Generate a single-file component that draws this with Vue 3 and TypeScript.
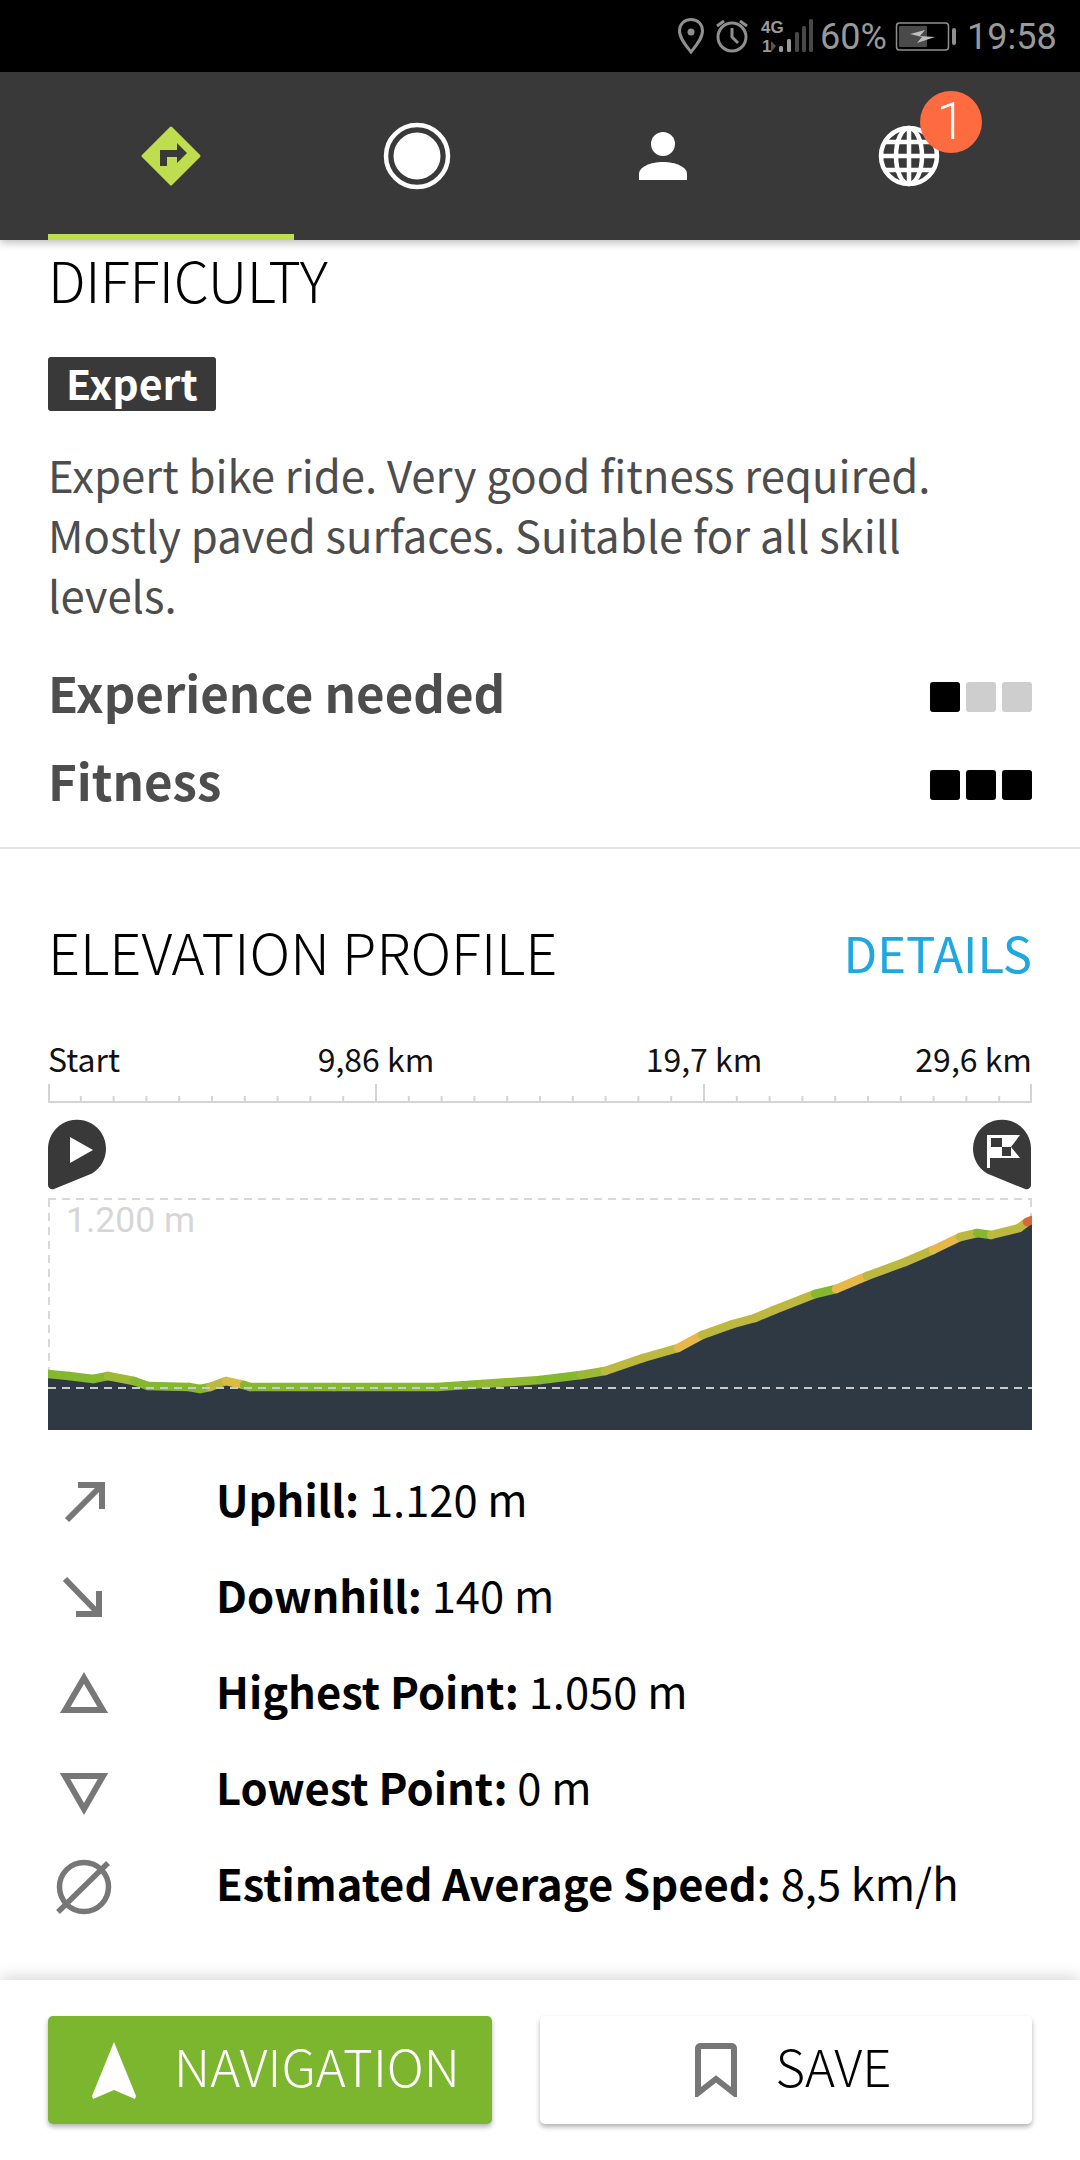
<script setup lang="ts">
type Seg = { x1: number; y1: number; x2: number; y2: number; color: string };

const GREEN = '#85b82e';
const OLIVE = '#bdb83f';
const ORANGE = '#e6b84a';
const RED = '#d9663c';

// x, y, colour of the segment that ends at this point
const profile: [number, number, string][] = [
  [48, 1374, GREEN], [69, 1376, GREEN], [93, 1379, GREEN], [108, 1376, GREEN], [134, 1381, '#a0b838'],
  [148, 1386, GREEN], [189, 1387, GREEN], [200, 1389, GREEN], [210, 1387, GREEN], [226, 1381, OLIVE],
  [244, 1385, '#d8bc44'], [250, 1387, GREEN], [334, 1387, GREEN], [437, 1387, GREEN], [482, 1384, GREEN],
  [540, 1380, '#92b832'], [581, 1375, GREEN], [605, 1371, '#9cb836'], [643, 1358, OLIVE], [678, 1348, OLIVE],
  [702, 1335, ORANGE], [733, 1324, OLIVE], [755, 1318, OLIVE], [774, 1310, OLIVE], [815, 1294, OLIVE], [836, 1289, GREEN],
  [867, 1276, ORANGE], [905, 1262, OLIVE], [933, 1250, OLIVE], [960, 1237, ORANGE], [977, 1233, OLIVE],
  [991, 1235, GREEN], [1019, 1228, OLIVE], [1027, 1222, OLIVE], [1032, 1220, RED],
];

const segments: Seg[] = profile.slice(1).map((p, i) => ({
  x1: profile[i][0],
  y1: profile[i][1],
  x2: p[0],
  y2: p[1],
  color: p[2],
}));

const areaPoints = [
  '48,1430',
  ...profile.map((p) => `${p[0]},${p[1] + 2}`),
  '1032,1430',
].join(' ');

const minorTicks: number[] = [];
for (let i = 0; i <= 30; i++) minorTicks.push(48 + (984 / 30) * i);

const axisLabels = [
  { text: '9,86 km', x: 328 },
  { text: '19,7 km', x: 656 },
];

const stats = [
  { icon: 'up', label: 'Uphill:', value: '1.120 m' },
  { icon: 'down', label: 'Downhill:', value: '140 m' },
  { icon: 'high', label: 'Highest Point:', value: '1.050 m' },
  { icon: 'low', label: 'Lowest Point:', value: '0 m' },
  { icon: 'avg', label: 'Estimated Average Speed:', value: '8,5 km/h' },
];
</script>

<template>
  <div class="screen">
    <div class="status-bar">
      <svg class="status-icons" width="282" height="72" viewBox="678 0 282 72">
        <path d="M691 19.500c-7 0-11.500 5-11.500 11.500 0 7 6 14 11.500 21 5.500-7 11.500-14 11.500-21 0-6.500-4.500-11.500-11.500-11.500z" fill="none" stroke="#8f8f8f" stroke-width="3" />
        <circle cx="691" cy="32" r="3.500" fill="#8f8f8f" />
        <circle cx="732" cy="37" r="14" fill="none" stroke="#8f8f8f" stroke-width="3" />
        <path d="M732 28v9l6 6M717 26l7-5M747 26l-7-5" fill="none" stroke="#8f8f8f" stroke-width="3" />
        <text x="761" y="33" class="net-text">4G</text>
        <text x="762" y="52" class="net-text">1</text>
        <path d="M771 41l5 5-5 6z" fill="#555" />
        <g fill="#9a9a9a">
          <rect x="779" y="46" width="4" height="6" rx="1.500" />
          <rect x="787" y="39" width="4" height="13" rx="1.500" />
        </g>
        <g fill="#484848">
          <rect x="795" y="32" width="4" height="20" rx="1.500" />
          <rect x="802" y="26" width="4" height="26" rx="1.500" />
          <rect x="809" y="19" width="4" height="33" rx="1.500" />
        </g>
        <rect x="896.500" y="23" width="52" height="27" rx="3" fill="none" stroke="#8f8f8f" stroke-width="1.500" />
        <rect x="899" y="26" width="28" height="21" rx="1" fill="#4a4a4a" />
        <path d="M910 34l15-4-5 6 15 1-18 6 5-6z" fill="#bdbdbd" />
        <rect x="952" y="28" width="4" height="17" rx="2" fill="#8f8f8f" />
      </svg>
      <span class="percent">60%</span>
      <span class="clock">19:58</span>
    </div>

    <nav class="tabs">
      <div class="tab active">
        <svg width="64" height="64" viewBox="139 124 64 64">
          <path d="M171 128l28 28-28 28-28-28z" fill="#bfdd4f" stroke="#bfdd4f" stroke-width="3" stroke-linejoin="round" />
          <path d="M160 166v-16h17v-7l10 10-10 10v-6h-10v9z" fill="#393939" />
        </svg>
      </div>
      <div class="tab">
        <svg width="68" height="68" viewBox="383 122 68 68">
          <circle cx="417" cy="156" r="31" fill="none" stroke="#fff" stroke-width="4.500" />
          <circle cx="417" cy="156" r="23.500" fill="#fff" />
        </svg>
      </div>
      <div class="tab">
        <svg width="52" height="52" viewBox="637 130 52 52">
          <circle cx="663" cy="144" r="12" fill="#fff" />
          <path d="M639 180v-6c0-7 11-12 24-12s24 5 24 12v6z" fill="#fff" />
        </svg>
      </div>
      <div class="tab">
        <svg width="64" height="64" viewBox="877 124 64 64">
          <g fill="none" stroke="#fff" stroke-width="4.500">
            <circle cx="909" cy="156" r="28" />
            <ellipse cx="909" cy="156" rx="13" ry="28" />
            <path d="M909 128v56M881 156h56M885 142h48M885 170h48" />
          </g>
        </svg>
        <span class="badge">1</span>
      </div>
    </nav>

    <main class="content">
      <section class="difficulty">
        <h2 class="title title-top">DIFFICULTY</h2>
        <span class="tag">Expert</span>
        <p class="desc">Expert bike ride. Very good fitness required. Mostly paved surfaces. Suitable for all skill levels.</p>
        <div class="skills">
          <div class="skill">
            <span>Experience needed</span>
            <div class="dots"><i class="on"></i><i></i><i></i></div>
          </div>
          <div class="skill">
            <span>Fitness</span>
            <div class="dots"><i class="on"></i><i class="on"></i><i class="on"></i></div>
          </div>
        </div>
      </section>

      <section class="elevation">
        <div class="elevation-head">
          <h2 class="title">ELEVATION PROFILE</h2>
          <span class="details">DETAILS</span>
        </div>

        <div class="axis">
          <span class="axis-start">Start</span>
          <span
            v-for="label in axisLabels"
            :key="label.text"
            class="axis-mid"
            :style="{ left: `${label.x}px` }">{{ label.text }}</span>
          <span class="axis-end">29,6 km</span>
        </div>

        <div class="chart">
          <svg width="984" height="346" viewBox="48 1084 984 346">
            <g stroke="#d4d4d4" stroke-width="2">
              <line x1="48" y1="1102" x2="1032" y2="1102" />
              <line v-for="t in minorTicks" :key="t" :x1="t" y1="1096" :x2="t" y2="1102" />
              <line x1="49" y1="1084" x2="49" y2="1102" />
              <line x1="376" y1="1084" x2="376" y2="1102" />
              <line x1="704" y1="1084" x2="704" y2="1102" />
              <line x1="1031" y1="1084" x2="1031" y2="1102" />
            </g>

            <path d="M48 1149a29 29 0 1 1 44 24.500l-38 15.500c-3 1-6-1-6-4z" fill="#393939" />
            <path d="M70 1137l23 13-23 13z" fill="#fff" />

            <path d="M1031 1149a29 29 0 1 0-44 24.500l38 15.500c3 1 6-1 6-4z" fill="#393939" />
            <path d="M987 1135h33l-9 12 9 11h-30v10h-3z" fill="#fff" />
            <path d="M991 1138h11v9h-11zM1002 1147h9v9h-9z" fill="#393939" />

            <g fill="none" stroke="#d8d8d8" stroke-width="2" stroke-dasharray="8 6">
              <line x1="48" y1="1199" x2="1032" y2="1199" />
              <line x1="49" y1="1199" x2="49" y2="1430" />
              <line x1="1031" y1="1199" x2="1031" y2="1430" />
            </g>

            <polygon :points="areaPoints" fill="#2e3944" />
            <line
              v-for="(s, i) in segments"
              :key="i"
              :x1="s.x1"
              :y1="s.y1"
              :x2="s.x2"
              :y2="s.y2"
              :stroke="s.color"
              stroke-width="8.500"
              stroke-linecap="round" />
            <line x1="48" y1="1388" x2="1032" y2="1388" stroke="#c6cacd" stroke-width="2" stroke-dasharray="8 6" />
          </svg>
          <span class="chart-max">1.200 m</span>
        </div>

        <ul class="stats">
          <li v-for="s in stats" :key="s.icon" class="stat">
            <svg class="stat-icon" width="72" height="72" viewBox="0 0 72 72">
              <g fill="none" stroke="#777" stroke-width="6">
                <path v-if="s.icon === 'up'" d="M19 55l35-35M30 20h24v24" />
                <path v-else-if="s.icon === 'down'" d="M17 18l34 35M28 53h23V30" />
                <path v-else-if="s.icon === 'high'" d="M36 21l18.800 32H17.200z" />
                <path v-else-if="s.icon === 'low'" d="M36 56L17 23h38z" />
                <template v-else>
                  <circle cx="36" cy="38" r="24.500" stroke-width="5.500" />
                  <path d="M10 63l50-49" stroke-width="5.500" />
                </template>
              </g>
            </svg>
            <span class="stat-text"><b>{{ s.label }}</b> {{ s.value }}</span>
          </li>
        </ul>
      </section>
    </main>

    <footer class="actions">
      <button class="btn primary">
        <svg width="46" height="57" viewBox="0 0 46 57">
          <path d="M23 0l22 54-1 3-21-9-21 9-1-3z" fill="#fff" />
        </svg>
        <span>NAVIGATION</span>
      </button>
      <button class="btn secondary">
        <svg width="42" height="54" viewBox="0 0 42 54">
          <path d="M3 50V5c0-1 1-2 2-2h32c1 0 2 1 2 2v45L21 36z" fill="none" stroke="#777" stroke-width="6" />
        </svg>
        <span>SAVE</span>
      </button>
    </footer>
  </div>
</template>

<style>
html,
body {
  margin: 0;
  background: #fff;
}
</style>

<style scoped>
.screen {
  width: 1080px;
  height: 2160px;
  display: flex;
  flex-direction: column;
  overflow: hidden;
  font-family: "Noto Sans CJK SC", "Open Sans", sans-serif;
  background: #fff;
}

.status-bar {
  height: 72px;
  flex: none;
  background: #000;
  color: #999;
  font-family: Roboto, sans-serif;
  font-size: 36px;
  position: relative;
}

.status-icons {
  position: absolute;
  left: 678px;
  top: 0;
}

.percent {
  position: absolute;
  left: 820px;
  top: 16px;
}

.clock {
  position: absolute;
  left: 967px;
  top: 16px;
}

.net-text {
  font-size: 17px;
  font-weight: 700;
  fill: #9a9a9a;
  font-family: "Liberation Sans", sans-serif;
}

.tabs {
  height: 168px;
  flex: none;
  background: #393939;
  display: flex;
  padding: 0 48px;
  position: relative;
  z-index: 2;
  box-shadow: 0 3px 8px rgba(0, 0, 0, 0.25);
}

.tab {
  width: 246px;
  box-sizing: border-box;
  display: flex;
  align-items: center;
  justify-content: center;
  position: relative;
}

.tab.active {
  border-bottom: 6px solid #bfdd4f;
  padding-top: 6px;
}

.badge {
  position: absolute;
  left: 134px;
  top: 19px;
  width: 62px;
  height: 62px;
  border-radius: 50%;
  background: #ff6b40;
  color: #fff;
  font-family: Roboto, sans-serif;
  font-weight: 300;
  font-size: 52px;
  line-height: 62px;
  text-align: center;
}

.content {
  flex: 1;
  min-height: 0;
}

.difficulty {
  padding: 0 48px;
  height: 609px;
  box-sizing: border-box;
  border-bottom: 2px solid #e4e4e4;
}

.title {
  margin: 0;
  font-size: 56px;
  font-weight: 300;
  line-height: 84px;
  color: #000;
}

.title-top {
  line-height: 78px;
  letter-spacing: -0.4px;
}

.tag {
  display: inline-block;
  margin-top: 39px;
  height: 54px;
  line-height: 50px;
  padding: 0 18px;
  border-radius: 3px;
  background: #393939;
  color: #fff;
  font-size: 41px;
  font-weight: 700;
}

.desc {
  margin: 33px 0 0;
  font-size: 43.700px;
  line-height: 60px;
  color: #4d4d4d;
}

.skills {
  margin-top: 23px;
}

.skill {
  height: 88px;
  display: flex;
  justify-content: space-between;
  align-items: center;
  font-size: 49.200px;
  font-weight: 700;
  color: #4d4d4d;
}

.dots {
  display: flex;
  gap: 6px;
  margin-top: 12px;
}

.dots i {
  display: block;
  width: 30px;
  height: 30px;
  border-radius: 3px;
  background: #cecece;
}

.dots i.on {
  background: #000;
}

.elevation {
  padding: 60px 48px 0;
}

.elevation-head {
  display: flex;
  justify-content: space-between;
  align-items: center;
}

.details {
  font-size: 49px;
  color: #1ea7e0;
}

.axis {
  position: relative;
  height: 50px;
  margin-top: 41px;
  font-size: 32px;
  line-height: 48px;
  color: #111;
}

.axis-start {
  position: absolute;
  left: 0;
}

.axis-mid {
  position: absolute;
  transform: translateX(-50%);
}

.axis-end {
  position: absolute;
  right: 0;
}

.chart {
  position: relative;
  height: 346px;
}

.chart svg {
  display: block;
}

.chart-max {
  position: absolute;
  left: 18px;
  top: 115px;
  font-family: Roboto, sans-serif;
  font-size: 35.500px;
  color: #d6d6d6;
}

.stats {
  list-style: none;
  margin: 20px 0 0;
  padding: 0;
}

.stat {
  height: 96px;
  display: flex;
  align-items: center;
  gap: 96px;
  font-size: 43.500px;
  color: #000;
}

.stat-icon {
  flex: none;
  margin-top: 6px;
}

.stat-text b {
  font-weight: 700;
}

.actions {
  height: 180px;
  flex: none;
  display: flex;
  gap: 48px;
  padding: 36px 48px 0;
  box-sizing: border-box;
  background: #fff;
  position: relative;
  box-shadow: 0 -4px 14px rgba(0, 0, 0, 0.14);
}

.btn {
  height: 108px;
  border: none;
  border-radius: 5px;
  display: flex;
  align-items: center;
  justify-content: center;
  font-family: inherit;
  font-size: 51px;
  font-weight: 300;
  padding: 0;
  box-shadow: 0 3px 5px rgba(0, 0, 0, 0.3);
}

.btn span {
  margin-bottom: 10px;
}

.primary {
  width: 444px;
  background: #7cb62f;
  color: #fff;
  gap: 37px;
  padding-left: 11px;
}

.secondary {
  width: 492px;
  background: #fff;
  color: #000;
  gap: 38px;
  padding-left: 15px;
}
</style>
